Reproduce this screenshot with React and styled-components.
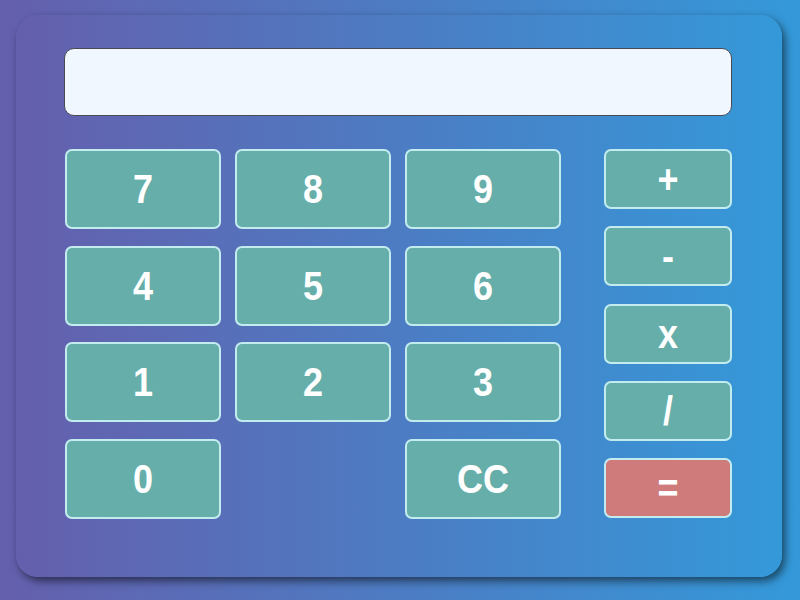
import React from "react";
import styled, { createGlobalStyle } from "styled-components";

const Global = createGlobalStyle`
  html, body { margin: 0; padding: 0; }
  body {
    width: 800px;
    height: 600px;
    overflow: hidden;
    background: linear-gradient(to right, #655fad, #3499d9);
    font-family: "Liberation Sans", Arial, sans-serif;
  }
`;

const Page = styled.div`
  width: 800px;
  height: 600px;
  box-sizing: border-box;
  padding: 15px 18px 23px 16px;
  display: flex;
`;

const Card = styled.div`
  flex: 1;
  box-sizing: border-box;
  border-radius: 22px;
  background: linear-gradient(to right, #655fad, #3499d9);
  box-shadow: 3px 4px 8px rgba(0, 0, 0, 0.55);
  padding: 33px 50px 0 48px;
  display: flex;
  flex-direction: column;
`;

const Display = styled.div`
  height: 68px;
  box-sizing: border-box;
  border: 1px solid #4a4a55;
  border-radius: 10px;
  background: #f0f7fe;
  margin-bottom: 33px;
`;

const Keypad = styled.div`
  display: flex;
  justify-content: space-between;
  padding-left: 1px;
`;

const Digits = styled.div`
  display: grid;
  grid-template-columns: repeat(3, 156px);
  grid-auto-rows: 80px;
  column-gap: 14px;
  row-gap: 16.7px;
`;

const Ops = styled.div`
  display: flex;
  flex-direction: column;
  gap: 17.3px;
  width: 128px;
`;

const Key = styled.button`
  box-sizing: border-box;
  height: ${(p) => (p.$op ? "60px" : "80px")};
  border: 2px solid #c3ecef;
  border-radius: 7px;
  background: ${(p) => (p.$eq ? "#cf7a7b" : "#66aeaa")};
  color: #ffffff;
  font-family: "Liberation Sans", Arial, sans-serif;
  font-weight: bold;
  font-size: 36px;
  display: flex;
  align-items: center;
  justify-content: center;
  padding: 0;
  grid-column: ${(p) => p.$col || "auto"};
`;

const Label = styled.span`
  display: inline-block;
  transform: scaleY(1.13);
`;

const digits = [
  ["7"], ["8"], ["9"],
  ["4"], ["5"], ["6"],
  ["1"], ["2"], ["3"],
  ["0"], ["CC", "3"],
];

const ops = ["+", "-", "x", "/"];

export default function App() {
  return (
    <>
      <Global />
      <Page>
        <Card>
          <Display />
          <Keypad>
            <Digits>
              {digits.map(([label, col]) => (
                <Key key={label} $col={col}>
                  <Label>{label}</Label>
                </Key>
              ))}
            </Digits>
            <Ops>
              {ops.map((o) => (
                <Key key={o} $op>
                  <Label>{o}</Label>
                </Key>
              ))}
              <Key $op $eq>
                <Label>=</Label>
              </Key>
            </Ops>
          </Keypad>
        </Card>
      </Page>
    </>
  );
}
